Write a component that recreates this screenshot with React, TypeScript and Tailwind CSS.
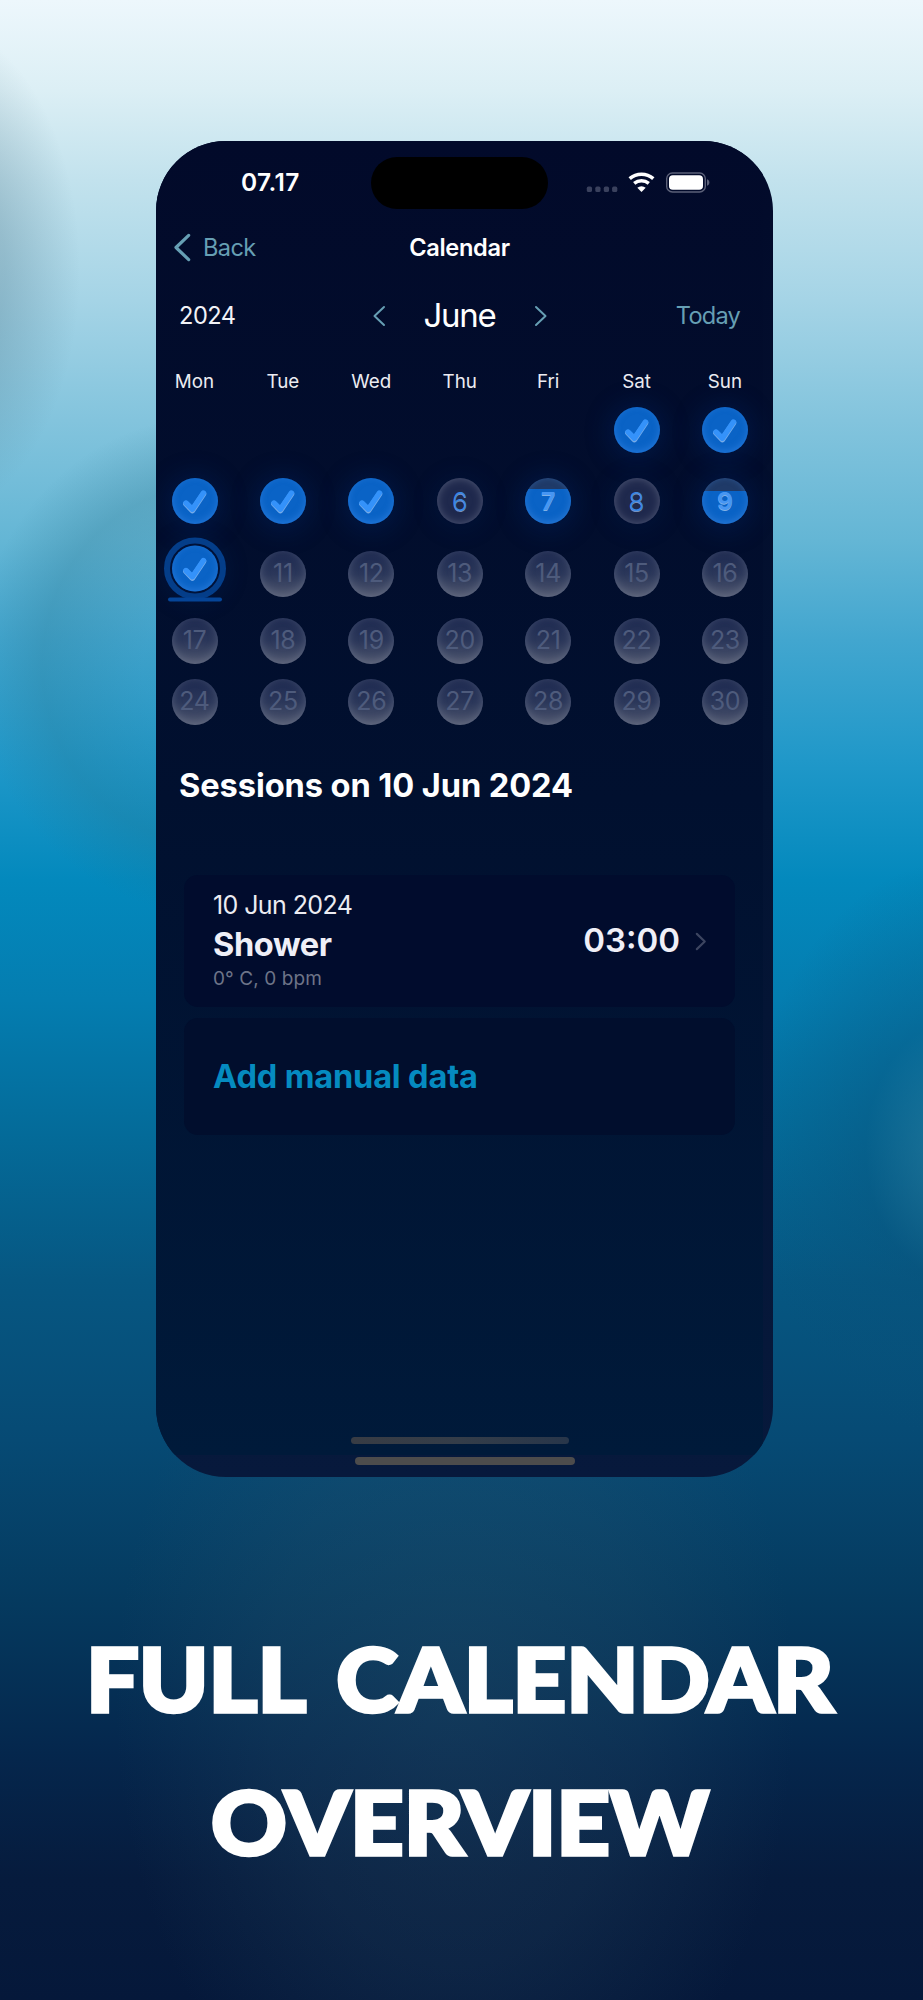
import React from 'react';

type DayState = 'done' | 'partial' | 'visited' | 'empty';

interface Day {
  date: number;
  state: DayState;
  fill?: number;
  selected?: boolean;
}

const WEEKDAYS = ['Mon', 'Tue', 'Wed', 'Thu', 'Fri', 'Sat', 'Sun'];

const emptyDays = (from: number): Day[] =>
  Array.from({ length: 7 }, (_, i) => ({ date: from + i, state: 'empty' as DayState }));

const WEEKS: { spacing: string; days: (Day | null)[] }[] = [
  {
    spacing: 'mt-1',
    days: [null, null, null, null, null, { date: 1, state: 'done' }, { date: 2, state: 'done' }],
  },
  {
    spacing: 'mt-[25px]',
    days: [
      { date: 3, state: 'done' },
      { date: 4, state: 'done' },
      { date: 5, state: 'done' },
      { date: 6, state: 'visited' },
      { date: 7, state: 'partial', fill: 76 },
      { date: 8, state: 'visited' },
      { date: 9, state: 'partial', fill: 72 },
    ],
  },
  {
    spacing: 'mt-[27px]',
    days: [{ date: 10, state: 'done', selected: true }, ...emptyDays(11).slice(0, 6)],
  },
  { spacing: 'mt-[21px]', days: emptyDays(17) },
  { spacing: 'mt-[15px]', days: emptyDays(24) },
];

const Chevron: React.FC<{ className: string; direction: 'left' | 'right'; stroke: number }> = ({
  className,
  direction,
  stroke,
}) => (
  <svg className={className} viewBox="0 0 12 20" fill="none" preserveAspectRatio="none">
    <path
      d={direction === 'left' ? 'M11 1 L1.5 10 L11 19' : 'M1 1 L10.5 10 L1 19'}
      stroke="currentColor"
      strokeWidth={stroke}
      strokeLinecap="round"
      strokeLinejoin="round"
    />
  </svg>
);

const StatusIcons: React.FC = () => (
  <svg className="w-[124px] h-[22px]" viewBox="0 0 124 22" fill="none">
    {[0.8, 9.3, 17.8, 26.1].map((x) => (
      <rect key={x} x={x} y="14.6" width="5.2" height="5.4" rx="1.6" fill="#3a415d" />
    ))}
    {/* wifi */}
    <path d="M43.7 6.6 A18.2 18.2 0 0 1 67.3 6.6" stroke="#fff" strokeWidth="3.6" />
    <path d="M48.2 11.4 A11.3 11.3 0 0 1 62.8 11.4" stroke="#fff" strokeWidth="3.4" />
    <path d="M51.3 15.7 A6.4 6.4 0 0 1 59.7 15.7 L55.5 20.1 Z" fill="#fff" />
    {/* battery */}
    <rect x="80.7" y="1" width="38.6" height="19" rx="5.6" stroke="#5b6078" strokeWidth="1.4" />
    <rect x="83" y="3.3" width="34" height="14.4" rx="3.8" fill="#fff" />
    <path d="M121 7.3 C124.2 8.3 124.2 12.7 121 13.7 Z" fill="#5b6078" />
  </svg>
);

const CheckMark: React.FC = () => (
  <svg className="absolute inset-0 w-full h-full" viewBox="0 0 46 46" fill="none">
    <path
      d="M14 25.8 L20.4 32.4 L31.4 16"
      stroke="#75abe8"
      strokeWidth="5.8"
      strokeLinecap="round"
      strokeLinejoin="round"
    />
    <path
      d="M14 25 L20.4 31.2 L31.4 15"
      stroke="#3492fa"
      strokeWidth="5.4"
      strokeLinecap="round"
      strokeLinejoin="round"
    />
  </svg>
);

const DayCell: React.FC<{ day: Day | null }> = ({ day }) => {
  if (!day) return <div className="w-[46px] h-[46px]" />;

  if (day.state === 'done') {
    return (
      <div className={`relative w-[46px] h-[46px] ${day.selected ? '-translate-y-[5.5px]' : ''}`}>
        {day.selected && (
          <>
            <span className="absolute -inset-2 rounded-full border-[6px] border-[#05408b]" />
            <span className="absolute -left-1 top-[51.5px] w-[54px] h-[4.5px] rounded-full bg-[#06479a]" />
          </>
        )}
        <div className="relative w-[46px] h-[46px] rounded-full bg-[#0a63c6] shadow-[inset_0_-2px_7px_rgba(60,140,235,0.5),0_2px_24px_6px_rgba(0,50,130,0.26)]">
          <CheckMark />
        </div>
      </div>
    );
  }

  if (day.state === 'partial') {
    return (
      <div className="relative w-[46px] h-[46px] rounded-full shadow-[0_2px_24px_6px_rgba(0,50,130,0.26)]">
        <div className="absolute inset-0 rounded-full overflow-hidden bg-[#1f3a68]">
          <div className="absolute inset-x-0 bottom-0 bg-[#0a63c6]" style={{ height: `${day.fill}%` }} />
          <div className="absolute inset-0 rounded-full shadow-[inset_0_-2px_7px_rgba(70,140,225,0.5)]" />
        </div>
        <span className="relative flex items-center justify-center w-full h-full pt-px text-[24.5px] font-bold text-[#4796f2] [text-shadow:0_0.6px_0_#7fb0e6]">
          {day.date}
        </span>
      </div>
    );
  }

  if (day.state === 'visited') {
    return (
      <div className="flex items-center justify-center w-[46px] h-[46px] pt-px rounded-full bg-[#1f294d] text-[26px] font-light text-[#3a86e4] shadow-[inset_0_0_9px_rgba(115,122,145,0.6),0_2px_24px_4px_rgba(0,50,130,0.14)] [text-shadow:0_0.8px_0_#7590bd]">
        {day.date}
      </div>
    );
  }

  return (
    <div className="flex items-center justify-center w-[46px] h-[46px] rounded-full bg-linear-to-b from-[#1d2950] via-[#2b375a] to-[#4f566e] text-[25px] tracking-[-0.3px] text-[#4e5b7c] shadow-[inset_0_-2px_9px_rgba(120,128,150,0.5)]">
      {day.date}
    </div>
  );
};

const PhoneScreen: React.FC = () => (
  <div className="w-[607px] h-[1314px] flex flex-col bg-linear-to-b from-[#020a2a] via-[#01102f] to-[#001a3a] font-['Inter',sans-serif] text-white">
    <div className="h-[84px] shrink-0 flex items-center">
      <div className="w-[215px] -mt-px pl-[85px] text-[24.5px] font-semibold tracking-[0.4px]">07.17</div>
      <div className="w-[177px] h-[52px] rounded-full bg-black" />
      <div className="pl-[38px] -mt-px">
        <StatusIcons />
      </div>
    </div>

    <div className="h-[46px] shrink-0 grid grid-cols-3 items-center px-[18px]">
      <div className="flex items-center text-[#669fb4]">
        <Chevron className="w-[16px] h-[27px] overflow-visible" direction="left" stroke={2.4} />
        <span className="ml-[13px] text-[23.6px] tracking-[-0.6px]">Back</span>
      </div>
      <span className="text-center text-[23.6px] font-semibold tracking-[-0.3px]">Calendar</span>
    </div>

    <div className="h-[90px] shrink-0 grid grid-cols-3 items-center px-[23px]">
      <span className="text-[23.6px] tracking-[-0.5px] text-[#f2f2f7]">2024</span>
      <div className="flex items-center justify-center text-[#669fb4]">
        <Chevron className="w-[12px] h-[20px] overflow-visible" direction="left" stroke={2} />
        <span className="w-[150px] text-center text-[33px] tracking-[-1.3px] text-white">June</span>
        <Chevron className="w-[12px] h-[20px] overflow-visible" direction="right" stroke={2} />
      </div>
      <span className="text-right text-[23.6px] tracking-[-0.8px] text-[#669fb4]">Today</span>
    </div>

    <div className="h-[42px] shrink-0 flex items-center justify-between pl-[15.5px] pr-[15px]">
      {WEEKDAYS.map((name) => (
        <span key={name} className="w-[46px] text-center text-[18.8px] text-[#ececf2]">
          {name}
        </span>
      ))}
    </div>
    {WEEKS.map((week, i) => (
      <div key={i} className={`shrink-0 flex justify-between pl-[15.5px] pr-[15px] ${week.spacing}`}>
        {week.days.map((day, j) => (
          <DayCell key={j} day={day} />
        ))}
      </div>
    ))}

    <h2 className="mt-10 ml-[23px] shrink-0 text-[32.6px] leading-[40px] font-bold tracking-[-0.08px]">
      Sessions on 10 Jun 2024
    </h2>

    <div className="mt-[70px] mx-7 shrink-0 h-[132px] rounded-[14px] bg-[#010c2d] flex items-center justify-between px-[29px]">
      <div className="-mt-[2px]">
        <div className="text-[25px] leading-[37px] tracking-[-0.6px] text-[#ececf2]">10 Jun 2024</div>
        <div className="text-[32.6px] leading-[41px] font-bold tracking-[-0.4px] text-[#efeff7]">Shower</div>
        <div className="text-[19px] leading-[28px] tracking-[0.1px] text-[#6d7488]">0° C, 0 bpm</div>
      </div>
      <div className="flex items-center">
        <span className="text-[33px] font-semibold text-[#efeff7]">03:00</span>
        <Chevron className="ml-[16px] w-[10px] h-[17px] overflow-visible text-[#3c4560]" direction="right" stroke={2.6} />
      </div>
    </div>
    <div className="mt-[11px] mx-7 shrink-0 h-[117px] rounded-[14px] bg-[#010e2d] flex items-center pl-[29px]">
      <span className="text-[32.6px] font-bold tracking-[-0.18px] text-[#058bc0]">Add manual data</span>
    </div>

    <div className="mt-auto mb-[11px] mx-auto w-[218px] h-[7.5px] rounded-full bg-linear-to-r from-[#383c44] via-[#343d49] to-[#28364a]" />
  </div>
);

const App: React.FC = () => (
  <div className="relative w-[923px] h-[2000px] overflow-hidden bg-[linear-gradient(180deg,#edf7fc_0%,#dceff5_4.5%,#c2e2ed_9%,#a5d4e6_15%,#83c4dd_21%,#64b6d5_27%,#42a6cf_32%,#2098c9_38%,#0389bd_44%,#047db0_50%,#046a98_57%,#065782_64%,#064a74_72%,#053a5f_80%,#05264c_88%,#061b3d_94%,#05183a_100%)]">
    {/* soft blobs behind the device */}
    <div className="absolute inset-0 bg-[radial-gradient(ellipse_150px_250px_at_-70px_270px,rgba(70,100,120,0.36)_0%,rgba(70,110,130,0.28)_50%,rgba(80,140,160,0)_100%),radial-gradient(ellipse_240px_250px_at_215px_665px,rgba(50,130,165,0.12)_30%,rgba(40,115,140,0.28)_72%,rgba(40,130,160,0)_100%),radial-gradient(ellipse_210px_290px_at_960px_1150px,rgba(50,125,155,0.6)_0%,rgba(10,80,120,0.35)_45%,rgba(4,80,120,0)_100%),radial-gradient(ellipse_340px_480px_at_455px_1700px,rgba(45,85,110,0.32)_0%,rgba(45,85,110,0.2)_55%,rgba(30,80,110,0)_100%)]" />

    <div className="relative flex flex-col items-center pt-[141px]">
      <div className="w-[617px] h-[1336px] ml-[6px] rounded-[70px] overflow-hidden bg-linear-to-b from-[#020a2a] via-[#031332] to-[#07193c]">
        <PhoneScreen />
        <div className="mt-[2px] mx-auto w-[220px] h-[8px] rounded-full bg-[#4d4c4c]" />
      </div>

      <h1 className="mt-[130px] mr-[3px] flex flex-col items-center font-['Lato',sans-serif] font-black text-[87px] leading-[143px] text-white whitespace-nowrap scale-x-[1.075] [word-spacing:10px] [-webkit-text-stroke:3.5px_#fff]">
        <span>FULL CALENDAR</span>
        <span>OVERVIEW</span>
      </h1>
    </div>
  </div>
);

export default App;
